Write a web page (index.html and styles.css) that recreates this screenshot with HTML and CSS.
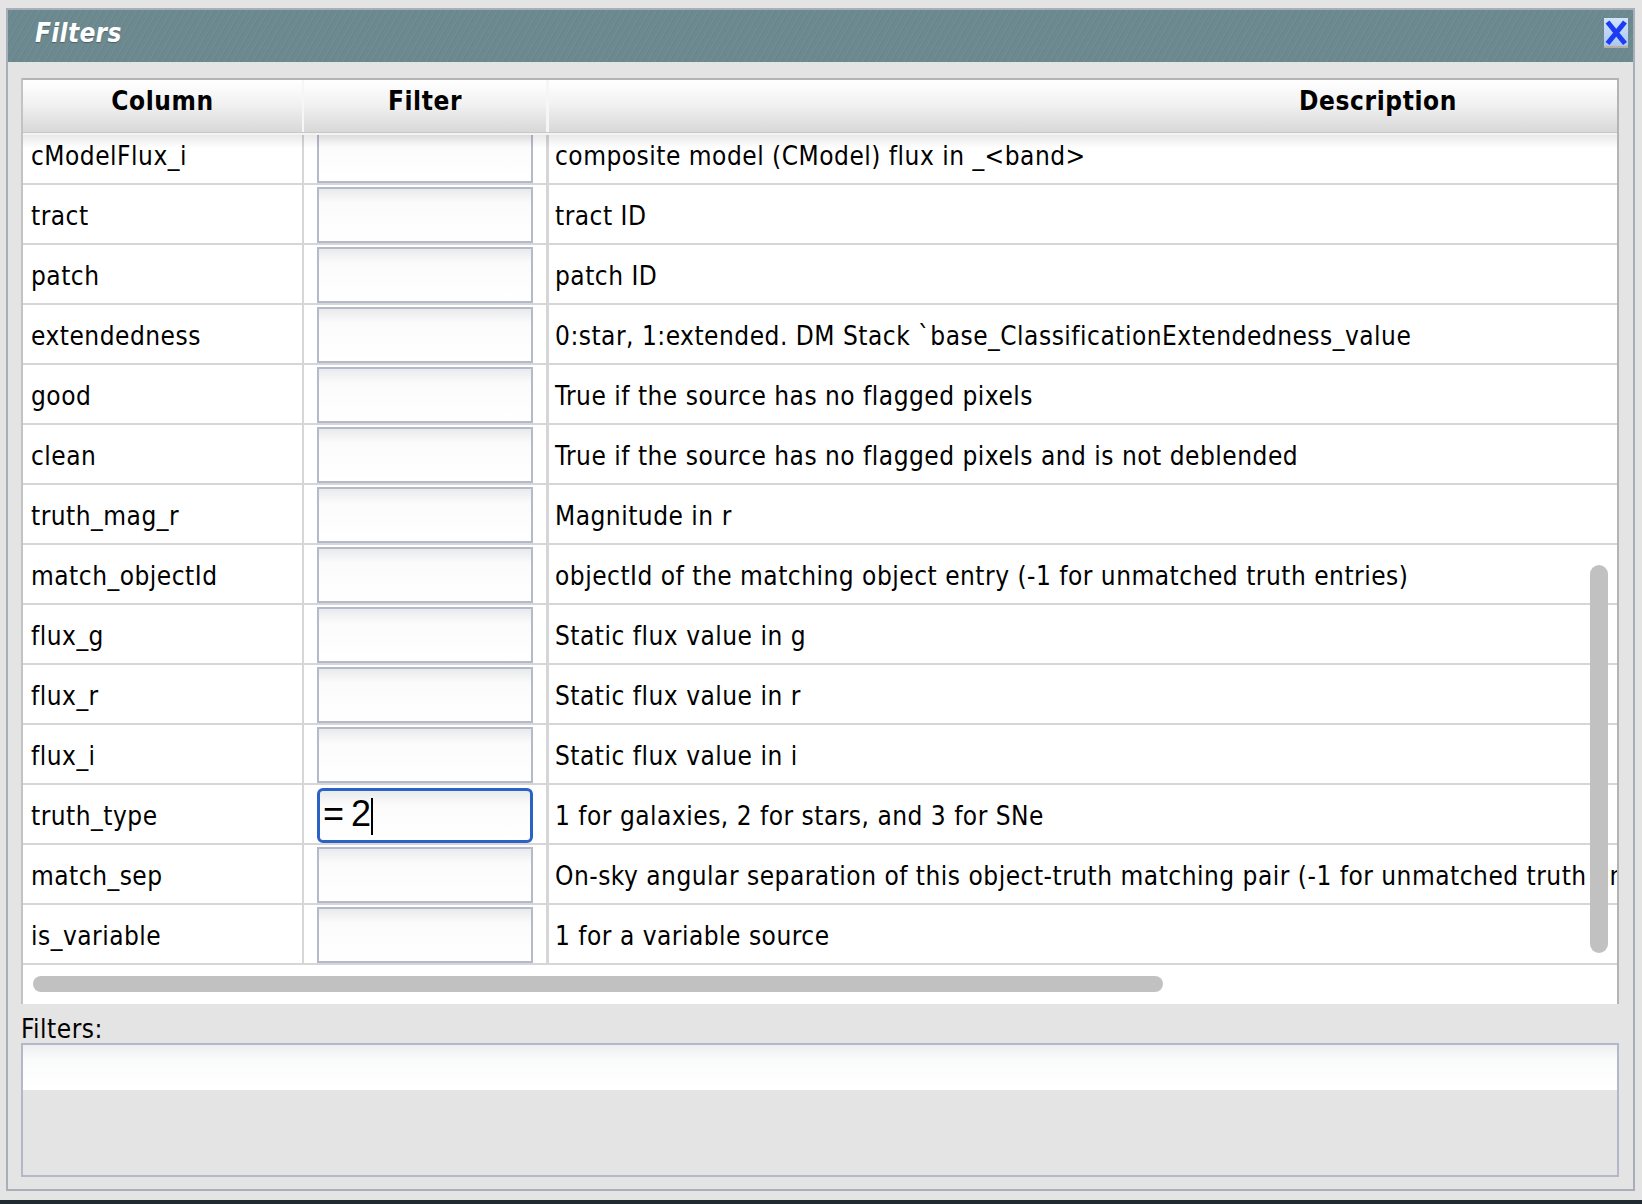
FILE: index.html
```html
<!DOCTYPE html>
<html lang="en">
<head>
<meta charset="utf-8">
<title>Filters</title>
<link rel="stylesheet" href="styles.css">
</head>
<body>
<div class="page">
  <div class="dialog">
    <div class="titlebar">
      <span class="title">Filters</span>
      <button class="close" type="button" aria-label="Close">
        <svg width="24" height="28" viewBox="0 0 24 28"><path d="M3.5 4 L21 25.5 M21 4 L3.5 25.5" stroke="#1b3cf3" stroke-width="5" fill="none"/></svg>
      </button>
    </div>
    <div class="dialog-body">
      <div class="grid">
        <div class="grid-head">
          <div class="hcell c1">Column</div>
          <div class="hcell c2">Filter</div>
          <div class="hcell c3">Description</div>
        </div>
        <div class="grid-view">
          <div class="rows">
            <div class="row"><div class="cell c1">cModelFlux_i</div><div class="cell c2"><input class="filter-input" type="text"></div><div class="cell c3">composite model (CModel) flux in _&lt;band&gt;</div></div>
            <div class="row"><div class="cell c1">tract</div><div class="cell c2"><input class="filter-input" type="text"></div><div class="cell c3">tract ID</div></div>
            <div class="row"><div class="cell c1">patch</div><div class="cell c2"><input class="filter-input" type="text"></div><div class="cell c3">patch ID</div></div>
            <div class="row"><div class="cell c1">extendedness</div><div class="cell c2"><input class="filter-input" type="text"></div><div class="cell c3">0:star, 1:extended. DM Stack `base_ClassificationExtendedness_value</div></div>
            <div class="row"><div class="cell c1">good</div><div class="cell c2"><input class="filter-input" type="text"></div><div class="cell c3">True if the source has no flagged pixels</div></div>
            <div class="row"><div class="cell c1">clean</div><div class="cell c2"><input class="filter-input" type="text"></div><div class="cell c3">True if the source has no flagged pixels and is not deblended</div></div>
            <div class="row"><div class="cell c1">truth_mag_r</div><div class="cell c2"><input class="filter-input" type="text"></div><div class="cell c3">Magnitude in r</div></div>
            <div class="row"><div class="cell c1">match_objectId</div><div class="cell c2"><input class="filter-input" type="text"></div><div class="cell c3">objectId of the matching object entry (-1 for unmatched truth entries)</div></div>
            <div class="row"><div class="cell c1">flux_g</div><div class="cell c2"><input class="filter-input" type="text"></div><div class="cell c3">Static flux value in g</div></div>
            <div class="row"><div class="cell c1">flux_r</div><div class="cell c2"><input class="filter-input" type="text"></div><div class="cell c3">Static flux value in r</div></div>
            <div class="row"><div class="cell c1">flux_i</div><div class="cell c2"><input class="filter-input" type="text"></div><div class="cell c3">Static flux value in i</div></div>
            <div class="row"><div class="cell c1">truth_type</div><div class="cell c2"><div class="filter-input active">= 2<span class="caret"></span></div></div><div class="cell c3">1 for galaxies, 2 for stars, and 3 for SNe</div></div>
            <div class="row"><div class="cell c1">match_sep</div><div class="cell c2"><input class="filter-input" type="text"></div><div class="cell c3">On-sky angular separation of this object-truth matching pair (-1 for unmatched truth entries)</div></div>
            <div class="row"><div class="cell c1">is_variable</div><div class="cell c2"><input class="filter-input" type="text"></div><div class="cell c3">1 for a variable source</div></div>
          </div>
          <div class="vthumb"></div>
          <div class="hthumb"></div>
        </div>
      </div>
      <div class="filters-label">Filters:</div>
      <div class="filters-box"><div class="filters-input"></div></div>
    </div>
  </div>
</div>
<div class="desktop"></div>
</body>
</html>
```

FILE: styles.css
```css
html, body {
  margin: 0;
  height: 100%;
}

body {
  background: #e4e4e4;
  font-family: "DejaVu Sans Condensed", "DejaVu Sans", sans-serif;
  font-stretch: condensed;
  color: #000;
  overflow: hidden;
}

.page {
  height: 1200px;
  box-sizing: border-box;
  padding: 8px 0 0 6px;
}

.dialog {
  width: 1629px;
  height: 1183px;
  box-sizing: border-box;
  border: 2px solid #a8afb9;
  background: #e4e4e4;
  display: flex;
  flex-direction: column;
}

.titlebar {
  height: 52px;
  flex: none;
  display: flex;
  justify-content: space-between;
  align-items: flex-start;
  background-color: #6c8990;
  background-image: repeating-linear-gradient(120deg, rgba(255,255,255,0) 0px, rgba(255,255,255,0) 3px, rgba(255,255,255,0.05) 4px, rgba(0,0,0,0.04) 5px, rgba(255,255,255,0) 6px);
}

.title {
  color: #fff;
  font-weight: bold;
  font-style: italic;
  font-size: 26px;
  line-height: 30px;
  letter-spacing: 0.3px;
  padding: 8px 0 0 27px;
  text-shadow: 0 1px 1px rgba(40, 60, 66, 0.5);
}

.close {
  margin: 8px 5px 0 0;
  width: 24px;
  height: 30px;
  box-sizing: border-box;
  padding: 0;
  border: 0;
  border-bottom: 2px solid #b7b0a2;
  background: linear-gradient(#d2e4fa, #aac8f0);
  display: flex;
  align-items: flex-start;
  justify-content: center;
}

.close svg {
  display: block;
}

.dialog-body {
  flex: 1;
  display: flex;
  flex-direction: column;
  padding: 16px 14px 12px 13px;
}

.grid {
  height: 926px;
  flex: none;
  box-sizing: border-box;
  border: 2px solid #c3c3c3;
  border-top-color: #b4b4b4;
  border-right-color: #b4b4b4;
  border-bottom: 0;
  background: #fff;
  display: flex;
  flex-direction: column;
  overflow: hidden;
}

.grid-head {
  height: 53px;
  flex: none;
  box-sizing: border-box;
  display: grid;
  grid-template-columns: 281px 245px 1658px;
  background: linear-gradient(#ffffff, #f2f2f2 45%, #d8d8d8);
  border-bottom: 1px solid #c8c8c8;
}

.hcell {
  font-weight: bold;
  font-size: 26px;
  line-height: 42px;
  letter-spacing: 0.6px;
  padding-bottom: 10px;
  text-align: center;
  white-space: nowrap;
}

.hcell.c1 {
  border-right: 2px solid #f6f6f6;
}

.hcell.c2 {
  border-right: 3px solid #f6f6f6;
}

.grid-view {
  flex: 1;
  position: relative;
  overflow: hidden;
  border-top: 2px solid #f3f3f3;
}

.grid-view::before {
  content: "";
  position: absolute;
  left: 0;
  right: 0;
  top: 0;
  height: 13px;
  background: linear-gradient(rgba(0, 0, 0, 0.09), rgba(0, 0, 0, 0));
  z-index: 1;
}

.rows {
  margin-top: -10px;
}

.row {
  display: grid;
  grid-template-columns: 281px 245px 1658px;
  height: 60px;
  box-sizing: border-box;
  border-bottom: 2px solid #d6d6d6;
}

.cell {
  font-size: 26px;
  letter-spacing: 0.5px;
  display: flex;
  align-items: center;
  white-space: nowrap;
  box-sizing: border-box;
  padding-top: 3px;
}

.cell.c1 {
  padding-left: 8px;
  border-right: 2px solid #d6d6d6;
}

.cell.c2 {
  align-items: flex-start;
  padding: 2px 0 0 13px;
  border-right: 3px solid #d6d6d6;
}

.cell.c3 {
  padding-left: 6px;
}

.filter-input {
  display: block;
  width: 216px;
  height: 56px;
  box-sizing: border-box;
  margin: 0;
  padding: 0 4px;
  border: 2px solid #b5b9ca;
  border-radius: 0;
  background: linear-gradient(#e9eaec, #fbfbfb 14px, #ffffff);
  font: inherit;
  outline: none;
}

.filter-input.active {
  height: 55px;
  margin-top: 1px;
  border: 3px solid #2b62c6;
  border-radius: 6px;
  padding: 3px 3px 0;
  font-family: "Liberation Sans", Arial, sans-serif;
  font-size: 36px;
  line-height: 40px;
  letter-spacing: 0;
  word-spacing: -3px;
  white-space: nowrap;
}

.caret {
  display: inline-block;
  width: 2px;
  height: 37px;
  background: #000;
  margin-left: 0;
  vertical-align: -9px;
}

.vthumb {
  position: absolute;
  left: 1567px;
  top: 430px;
  width: 18px;
  height: 388px;
  border-radius: 9px;
  background: #c1c1c1;
  z-index: 2;
}

.hthumb {
  position: absolute;
  left: 10px;
  top: 841px;
  width: 1130px;
  height: 16px;
  border-radius: 8px;
  background: #c1c1c1;
  z-index: 2;
}

.filters-label {
  font-size: 26px;
  line-height: 27px;
  letter-spacing: 0.5px;
  margin-top: 12px;
}

.filters-box {
  height: 134px;
  flex: none;
  box-sizing: border-box;
  border: 2px solid #b3b7c8;
  background: #e4e4e4;
}

.filters-input {
  height: 45px;
  background: linear-gradient(#eceef1, #fafbfb 14px, #ffffff);
}

.desktop {
  height: 12px;
  background: #222a31;
}
```
